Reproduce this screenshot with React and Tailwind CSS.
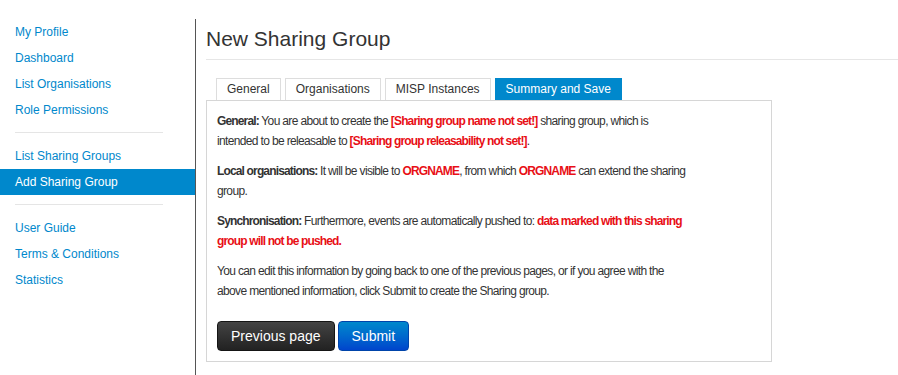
import React from "react";

const font = { fontFamily: '"Liberation Sans", Arial, Helvetica, sans-serif' };

function SideLink({ children, active }) {
  return (
    <li
      className={
        "h-[26px] pl-[15px] py-[3px] text-[12px] leading-[20px] " +
        (active ? "bg-[#0088cc] text-white" : "text-[#0088cc]")
      }
    >
      {children}
    </li>
  );
}

function Divider() {
  return <li className="ml-[15px] w-[148px] h-[2px] my-[9px] bg-[#e5e5e5] border-b border-white" />;
}

function Tab({ children, active }) {
  return (
    <div
      className={
        "h-[22px] px-[10px] border border-b-0 text-[12px] leading-[21px] " +
        (active
          ? "bg-[#0088cc] border-[#0088cc] text-white"
          : "bg-white border-[#dddddd] text-[#333333]")
      }
    >
      {children}
    </div>
  );
}

const R = ({ children }) => (
  <span className="font-bold text-[#e80f16] tracking-[-0.85px]">{children}</span>
);
const B = ({ children }) => <span className="font-bold tracking-[-0.85px]">{children}</span>;

export default function App() {
  return (
    <div className="flex h-[375px] w-[898px] overflow-hidden bg-white text-[#333333]" style={font}>
      <div className="w-[196px] shrink-0 mt-[19px] border-r border-[#555555]">
        <ul>
          <SideLink>My Profile</SideLink>
          <SideLink>Dashboard</SideLink>
          <SideLink>List Organisations</SideLink>
          <SideLink>Role Permissions</SideLink>
          <Divider />
          <SideLink>List Sharing Groups</SideLink>
          <SideLink active>Add Sharing Group</SideLink>
          <Divider />
          <SideLink>User Guide</SideLink>
          <SideLink>Terms &amp; Conditions</SideLink>
          <SideLink>Statistics</SideLink>
        </ul>
      </div>
      <div className="flex-1 pl-[10px]">
        <h2 className="mt-[19px] h-[40px] text-[21px] leading-[40px] font-normal text-[#333333]">
          New Sharing Group
        </h2>
        <div className="h-px bg-[#e6e6e6]" />
        <div className="mt-[18px] ml-[10px] flex gap-[4px]">
          <Tab>General</Tab>
          <Tab>Organisations</Tab>
          <Tab>MISP Instances</Tab>
          <Tab active>Summary and Save</Tab>
        </div>
        <div className="w-[566px] border border-[#d6d6d6] p-[10px] text-[12px] leading-[20px]">
          <div className="w-[471px] tracking-[-0.65px]">
            <p className="mb-[10px]">
              <B>General:</B> You are about to create the <R>[Sharing group name not set!]</R> sharing group, which is intended to be releasable to <R>[Sharing group releasability not set!]</R>.
            </p>
            <p className="mb-[10px]">
              <B>Local organisations:</B> It will be visible to <R>ORGNAME</R>, from which <R>ORGNAME</R> can extend the sharing group.
            </p>
            <p className="mb-[10px]">
              <B>Synchronisation:</B> Furthermore, events are automatically pushed to: <R>data marked with this sharing group will not be pushed.</R>
            </p>
            <p>
              You can edit this information by going back to one of the previous pages, or if you agree with the above mentioned information, click Submit to create the Sharing group.
            </p>
          </div>
          <div className="mt-[20px] flex gap-[3px]">
            <button className="h-[30px] px-[13px] rounded-[4px] border border-[#151515] bg-gradient-to-b from-[#444444] to-[#222222] text-white text-[14px] leading-[20px]">
              Previous page
            </button>
            <button className="h-[30px] px-[13px] rounded-[4px] border border-[#0044aa] bg-gradient-to-b from-[#0088cc] to-[#0044cc] text-white text-[14px] leading-[20px]">
              Submit
            </button>
          </div>
        </div>
      </div>
    </div>
  );
}
